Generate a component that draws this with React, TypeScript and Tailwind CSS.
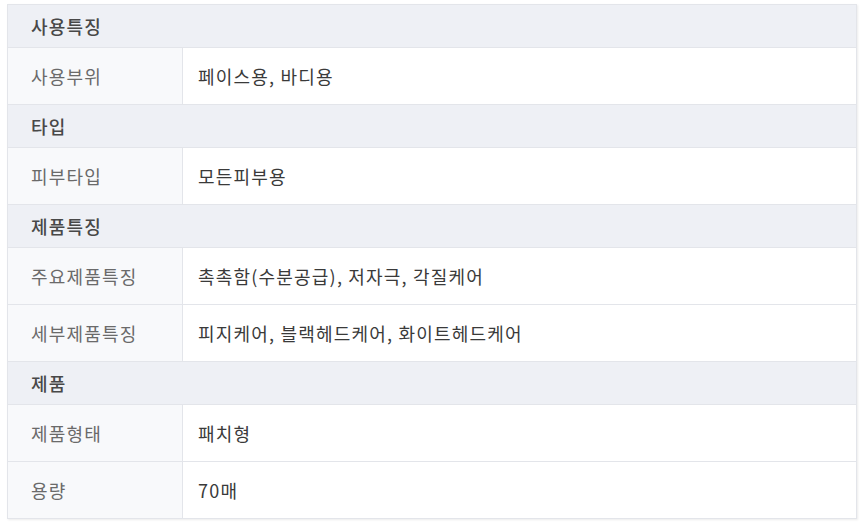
const sections = [
  { title: '사용특징', rows: [['사용부위', '페이스용, 바디용']] },
  { title: '타입', rows: [['피부타입', '모든피부용']] },
  {
    title: '제품특징',
    rows: [
      ['주요제품특징', '촉촉함(수분공급), 저자극, 각질케어'],
      ['세부제품특징', '피지케어, 블랙헤드케어, 화이트헤드케어'],
    ],
  },
  { title: '제품', rows: [['제품형태', '패치형'], ['용량', '70매']] },
]

export default function App() {
  return (
    <div
      className="w-[860px] h-[522px] bg-white pt-[4px] pl-[7px]"
      style={{ fontFamily: '"Noto Sans CJK KR", "Noto Sans", sans-serif' }}
    >
      <div className="w-[850px] border border-[#e3e5ea] shadow-[1px_1px_2px_rgba(0,0,0,0.08)] text-[18px] tracking-[1.2px]">
        {sections.map((s, i) => (
          <div key={s.title} className={i > 0 ? 'border-t border-[#e3e5ea]' : ''}>
            <div className="h-[42px] flex items-center pl-[23px] bg-[#eef0f5] font-medium text-[#484848]">
              {s.title}
            </div>
            {s.rows.map(([label, value]) => (
              <div key={label} className="flex h-[57px] border-t border-[#e3e5ea]">
                <div className="w-[175px] shrink-0 flex items-center pl-[23px] bg-[#f8f9fb] border-r border-[#e3e5ea] text-[#6a6a6a]">
                  {label}
                </div>
                <div className="flex-1 flex items-center pl-[15px] text-[#3a3a3a]">
                  {value}
                </div>
              </div>
            ))}
          </div>
        ))}
      </div>
    </div>
  )
}
